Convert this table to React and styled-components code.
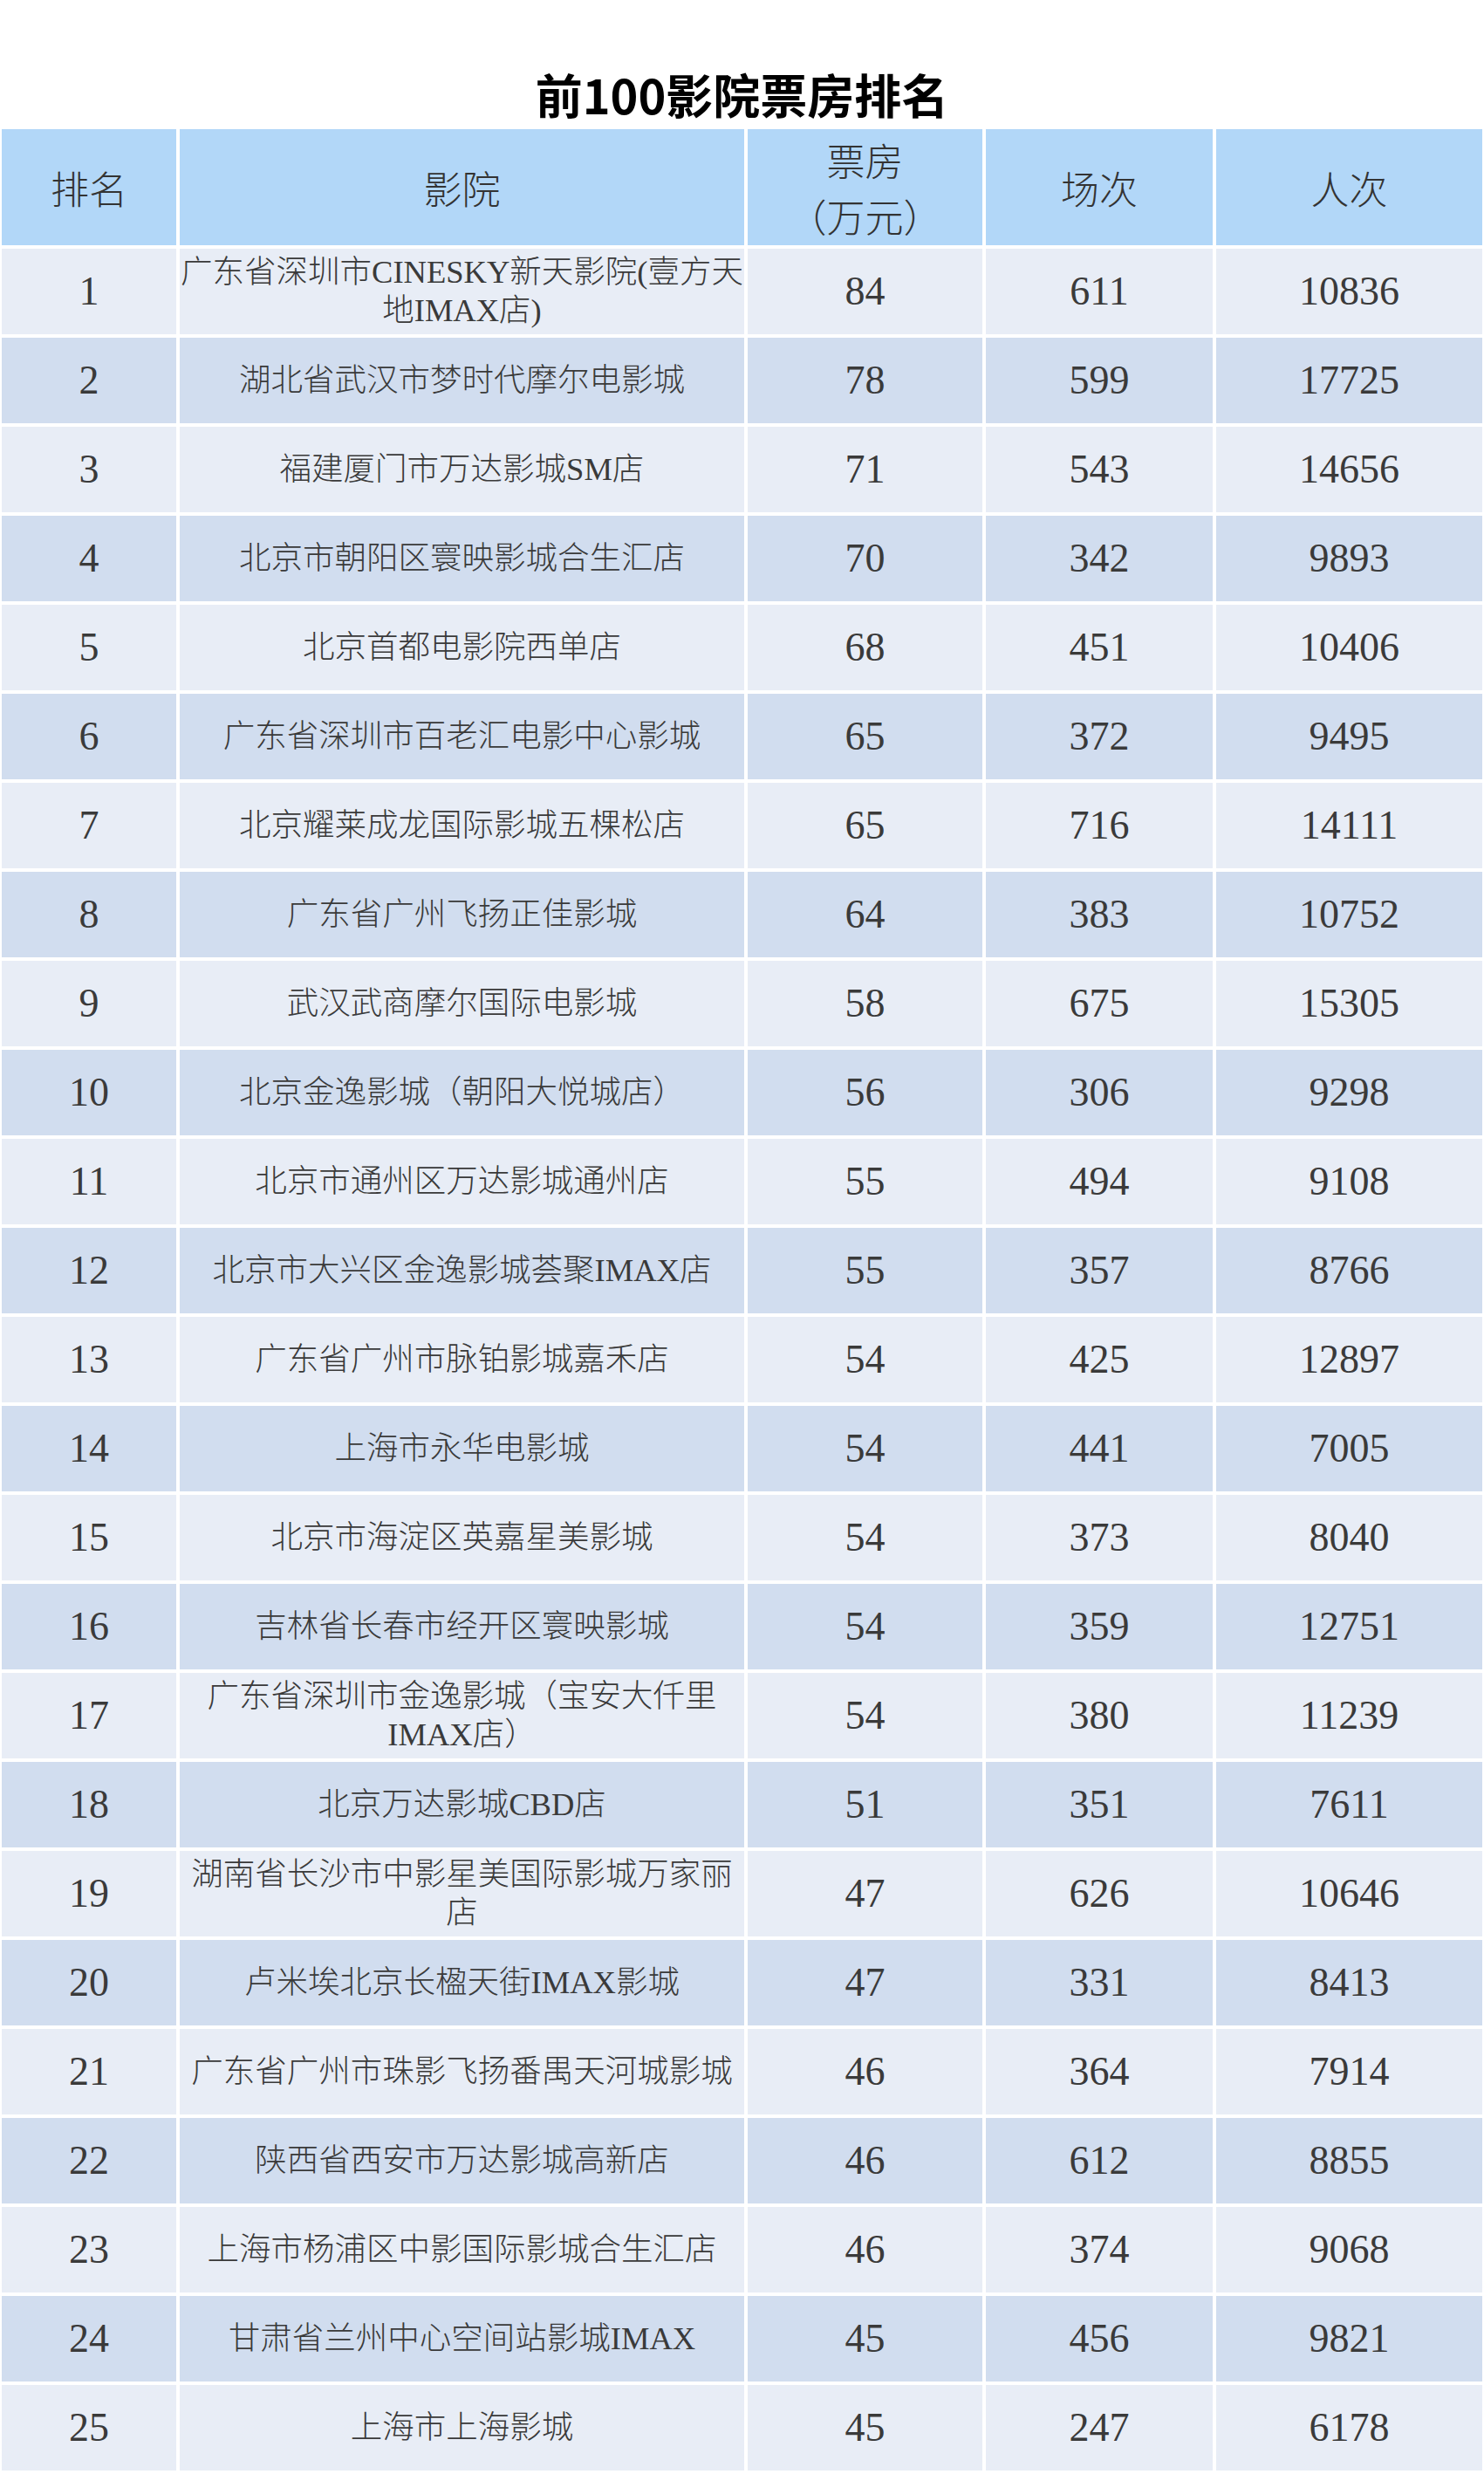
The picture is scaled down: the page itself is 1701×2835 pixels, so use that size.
import React from 'react';
import styled, { createGlobalStyle } from 'styled-components';

const GlobalStyle = createGlobalStyle`
  html, body {
    margin: 0;
    padding: 0;
    background: #fff;
  }
  body {
    font-family: "Liberation Serif", "Noto Sans CJK SC", serif;
  }
`;

const rows = [
  [1, ['广东省深圳市CINESKY新天影院(壹方天', '地IMAX店)'], 84, 611, 10836],
  [2, ['湖北省武汉市梦时代摩尔电影城'], 78, 599, 17725],
  [3, ['福建厦门市万达影城SM店'], 71, 543, 14656],
  [4, ['北京市朝阳区寰映影城合生汇店'], 70, 342, 9893],
  [5, ['北京首都电影院西单店'], 68, 451, 10406],
  [6, ['广东省深圳市百老汇电影中心影城'], 65, 372, 9495],
  [7, ['北京耀莱成龙国际影城五棵松店'], 65, 716, 14111],
  [8, ['广东省广州飞扬正佳影城'], 64, 383, 10752],
  [9, ['武汉武商摩尔国际电影城'], 58, 675, 15305],
  [10, ['北京金逸影城（朝阳大悦城店）'], 56, 306, 9298],
  [11, ['北京市通州区万达影城通州店'], 55, 494, 9108],
  [12, ['北京市大兴区金逸影城荟聚IMAX店'], 55, 357, 8766],
  [13, ['广东省广州市脉铂影城嘉禾店'], 54, 425, 12897],
  [14, ['上海市永华电影城'], 54, 441, 7005],
  [15, ['北京市海淀区英嘉星美影城'], 54, 373, 8040],
  [16, ['吉林省长春市经开区寰映影城'], 54, 359, 12751],
  [17, ['广东省深圳市金逸影城（宝安大仟里', 'IMAX店）'], 54, 380, 11239],
  [18, ['北京万达影城CBD店'], 51, 351, 7611],
  [19, ['湖南省长沙市中影星美国际影城万家丽', '店'], 47, 626, 10646],
  [20, ['卢米埃北京长楹天街IMAX影城'], 47, 331, 8413],
  [21, ['广东省广州市珠影飞扬番禺天河城影城'], 46, 364, 7914],
  [22, ['陕西省西安市万达影城高新店'], 46, 612, 8855],
  [23, ['上海市杨浦区中影国际影城合生汇店'], 46, 374, 9068],
  [24, ['甘肃省兰州中心空间站影城IMAX'], 45, 456, 9821],
  [25, ['上海市上海影城'], 45, 247, 6178],
];

const Page = styled.div`
  width: 1701px;
  background: #fff;
`;

const Title = styled.h1`
  margin: 0;
  padding: 80px 0 12px;
  text-align: center;
  font-family: "Noto Sans CJK SC", sans-serif;
  font-weight: 700;
  font-size: 54px;
  line-height: 56px;
  color: #000;
`;

const Table = styled.div`
  display: grid;
  grid-template-columns: 200px 647px 269px 260px 305px;
  grid-template-rows: 133px repeat(25, 98px);
  gap: 4px;
  padding: 0 2px;
`;

const HeadCell = styled.div`
  display: flex;
  flex-direction: column;
  align-items: center;
  justify-content: center;
  gap: 14px;
  text-align: center;
  background: #b2d7f8;
  color: #333;
  font-family: "Noto Sans CJK SC", sans-serif;
  font-weight: 300;
  font-size: 44px;
  line-height: 50px;
`;

const Cell = styled.div`
  display: flex;
  flex-direction: column;
  align-items: center;
  justify-content: center;
  text-align: center;
  background: ${p => (p.$even ? '#d1ddef' : '#e8edf6')};
  color: #3a3a3a;
  white-space: nowrap;
  font-family: ${p => (p.$name ? '"Liberation Serif", "Noto Sans CJK SC", serif' : '"Liberation Serif", serif')};
  font-weight: ${p => (p.$name ? 300 : 400)};
  font-size: ${p => (p.$name ? '36.5px' : '46px')};
  line-height: ${p => (p.$name ? '44px' : '52px')};
`;

const App = () => (
  <Page>
    <GlobalStyle />
    <Title>前100影院票房排名</Title>
    <Table>
      <HeadCell>排名</HeadCell>
      <HeadCell>影院</HeadCell>
      <HeadCell>
        <span>票房</span>
        <span>（万元）</span>
      </HeadCell>
      <HeadCell>场次</HeadCell>
      <HeadCell>人次</HeadCell>
      {rows.map(([rank, name, box, shows, people]) => {
        const even = rank % 2 === 0;
        return (
          <React.Fragment key={rank}>
            <Cell $even={even}>{rank}</Cell>
            <Cell $even={even} $name>
              {name.map(line => <span key={line}>{line}</span>)}
            </Cell>
            <Cell $even={even}>{box}</Cell>
            <Cell $even={even}>{shows}</Cell>
            <Cell $even={even}>{people}</Cell>
          </React.Fragment>
        );
      })}
    </Table>
  </Page>
);

export default App;
